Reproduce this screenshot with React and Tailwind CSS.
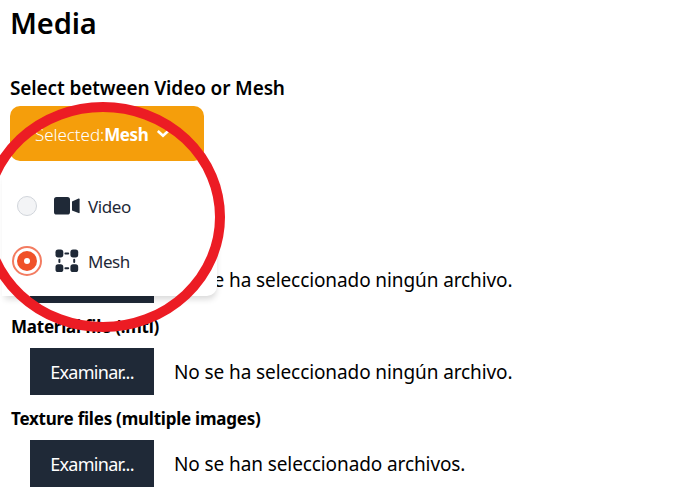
function VideoIcon() {
  return (
    <svg width="26" height="18" viewBox="0 0 26 18" fill="#1f2937">
      <rect x="0" y="0" width="16" height="17.6" rx="2.6" />
      <path d="M18 4.4 24.6 1.5Q25.6 1.2 25.6 2.2V15.4Q25.6 16.4 24.6 16.1L18 13.4Z" />
    </svg>
  );
}

function MeshIcon() {
  return (
    <svg width="24" height="24" viewBox="0 0 24 24" fill="#1f2937">
      <rect x="0.5" y="0.6" width="7.8" height="7.8" rx="2.6" />
      <rect x="15.4" y="0.6" width="7.8" height="7.8" rx="2.6" />
      <rect x="0.5" y="15.3" width="7.8" height="7.8" rx="2.6" />
      <rect x="15.4" y="15.3" width="7.8" height="7.8" rx="2.6" />
      <path
        d="M10.4 4.6H13.2M10.4 19.2H13.2M4.4 10.7V13.1M19.2 10.7V13.1"
        stroke="#1f2937"
        strokeWidth="2"
        strokeLinecap="round"
      />
    </svg>
  );
}

function FileField({ label, button, status }) {
  return (
    <div>
      <div className="flex h-[45px] items-center pt-[3px] pl-px text-[17px] font-bold whitespace-nowrap">
        <span className="tracking-[-0.23px]">{label}</span>
      </div>
      <div className="flex h-[47px] items-center pl-5">
        <button className="h-[47px] w-[124px] bg-[#1f2937] pt-[2px] text-[18px] tracking-[-0.7px] text-white">
          {button}
        </button>
        <span className="ml-5 pt-[2px] text-[19px] tracking-[-0.1px] whitespace-nowrap">{status}</span>
      </div>
    </div>
  );
}

export default function App() {
  return (
    <main className="relative h-[493px] w-[699px] overflow-hidden bg-white pl-[10px] font-['Noto_Sans',sans-serif] text-black">
      <h1 className="h-[46px] text-[29px] leading-[45px] font-semibold tracking-[-0.1px]">Media</h1>
      <h2 className="mt-[28px] h-[32px] text-[19px] leading-[28px] font-semibold">
        <span className="tracking-[-0.12px]">Select between Video or Mesh</span>
      </h2>
      <div className="relative h-[105px]">
        <button className="flex h-[55px] w-[194px] items-center rounded-[10px] bg-[#f59e0b] pt-[2px] pl-[25px] text-[17px] text-white">
          <span className="font-light tracking-[-0.05px]">Selected:</span>
          <b className="tracking-[-0.4px]">Mesh</b>
          <svg className="ml-[8px] -mt-[2px]" width="14" height="9" viewBox="0 0 14 9" fill="none">
            <path d="M1.8 2 7 6.8 12.2 2" stroke="white" strokeWidth="2.6" />
          </svg>
        </button>
        <div className="absolute top-[63px] -left-[8px] z-10 h-[127px] w-[215px] rounded-[10px] rounded-bl-none bg-white pt-[9px] text-[17px] text-[#1f2937] shadow-[1px_5px_6px_-2px_rgba(0,0,0,0.16)]">
          <label className="flex h-[55px] items-center pl-[15px]">
            <span className="size-5 rounded-full border border-[#d1d5db] bg-[#f3f4f6]" />
            <span className="ml-[17px] w-[34px]"><VideoIcon /></span>
            <span className="pt-[2px] tracking-[-0.4px]">Video</span>
          </label>
          <label className="flex h-[55px] items-center pl-[10px]">
            <span className="flex size-[30px] items-center justify-center rounded-full border-2 border-[#f37c61] bg-white">
              <span className="flex size-5 items-center justify-center rounded-full bg-[#f05128]">
                <span className="size-[6px] rounded-full bg-white" />
              </span>
            </span>
            <span className="ml-[13px] w-[33px]"><MeshIcon /></span>
            <span className="pt-[2px] tracking-[-0.5px]">Mesh</span>
          </label>
        </div>
      </div>
      <FileField status="No se ha seleccionado ningún archivo." />
      <FileField label="Material file (.mtl)" button="Examinar..." status="No se ha seleccionado ningún archivo." />
      <FileField label="Texture files (multiple images)" button="Examinar..." status="No se han seleccionado archivos." />
      <svg className="pointer-events-none absolute top-0 left-0 z-20" width="240" height="345" fill="none">
        <ellipse cx="103" cy="217" rx="117" ry="110" stroke="#ec1c24" strokeWidth="10" />
      </svg>
    </main>
  );
}
